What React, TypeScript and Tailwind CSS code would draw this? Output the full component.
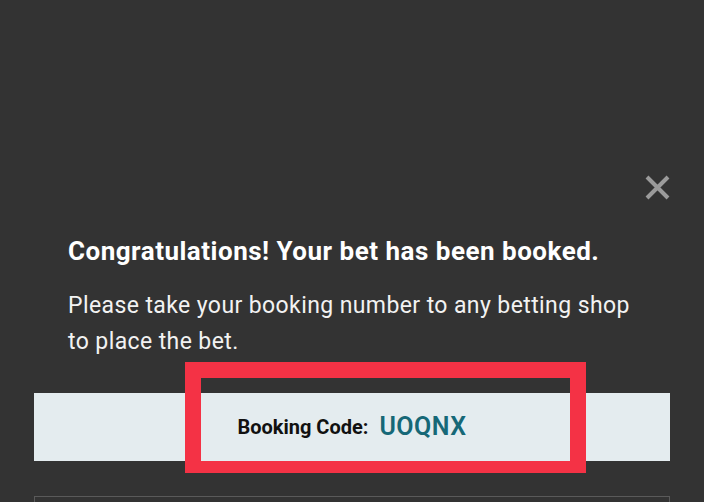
import React from 'react';

const App: React.FC = () => {
  return (
    <div
      className="relative h-[502px] w-[704px] overflow-hidden bg-[#333333]"
      style={{ fontFamily: 'Roboto, "Liberation Sans", sans-serif' }}
    >
      <div className="flex flex-col px-[34px] pt-[175px]">
        {/* close button */}
        <div className="flex justify-end">
          <button className="flex h-[25px] w-[25px] items-center justify-center">
            <svg width="25" height="25" viewBox="0 0 25 25">
              <path d="M2 2 L23 23 M23 2 L2 23" stroke="#9b9b9b" strokeWidth="4" strokeLinecap="butt" />
            </svg>
          </button>
        </div>

        <div className="pl-[34px] pr-[28px] pt-[36px]">
          <h2 className="text-[26px] font-bold leading-[30px] tracking-[0.5px] text-white">
            Congratulations! Your bet has been booked.
          </h2>
          <p className="mt-[22px] text-[23px] leading-[36px] tracking-[0.4px] text-[#f2f2f2]">
            Please take your booking number to any betting shop to place the bet.
          </p>
        </div>

        <div className="mt-[33px] flex h-[68px] items-center justify-center gap-[11px] bg-[#e4ecef]">
          <span className="text-[20px] font-bold text-[#111]">Booking Code:</span>
          <span className="text-[25px] font-semibold tracking-[0.5px] text-[#166877]">UOQNX</span>
        </div>

        <div className="mt-[35px] h-[40px] border border-[#5a5a5a]" />
      </div>

      {/* highlight annotation */}
      <div className="absolute left-[185px] top-[362px] h-[111px] w-[401px] border-[16px] border-b-[12px] border-[#f43245]" />
    </div>
  );
};

export default App;
